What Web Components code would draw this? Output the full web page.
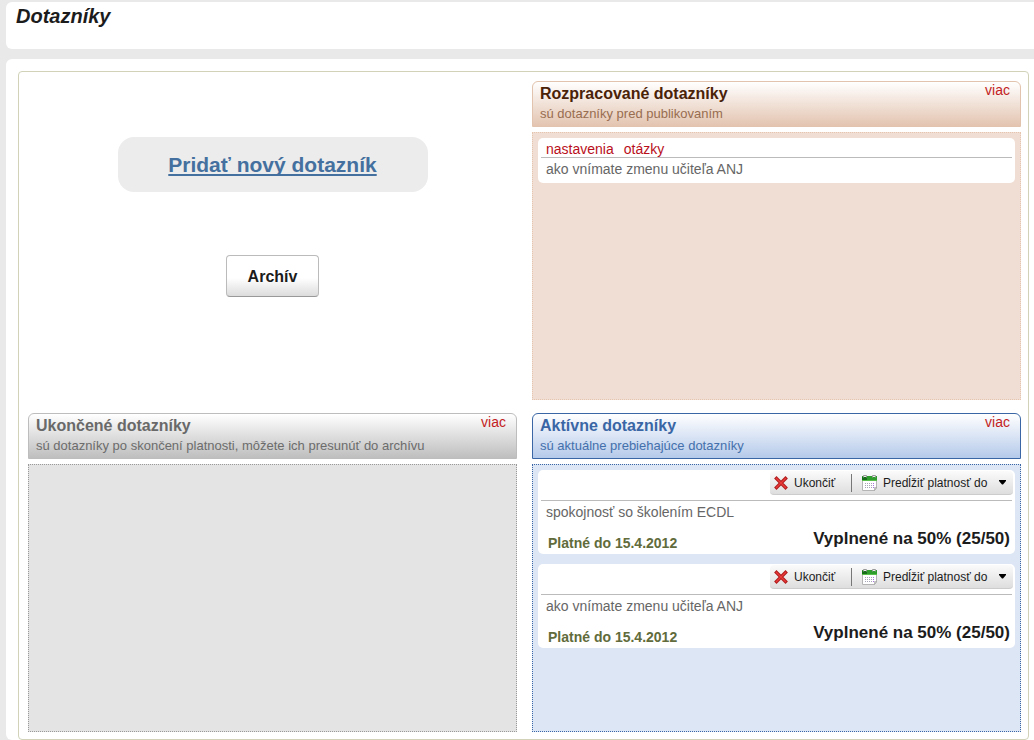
<!DOCTYPE html>
<html lang="sk">
<head>
<meta charset="utf-8">
<title>Dotazníky</title>
<style>
  html { background: #e9e9e9; }
  body { margin: 0; font-family: "Liberation Sans", Arial, sans-serif; color: #1c1c1c; }
</style>
</head>
<body>
<survey-page>
  <span slot="title">Dotazníky</span>
  <survey-board>
    <survey-actions></survey-actions>
    <survey-panel tone="draft">
      <span slot="title">Rozpracované dotazníky</span>
      <span slot="note">sú dotazníky pred publikovaním</span>
      <draft-card>ako vnímate zmenu učiteľa ANJ</draft-card>
    </survey-panel>
    <survey-panel tone="closed">
      <span slot="title">Ukončené dotazníky</span>
      <span slot="note">sú dotazníky po skončení platnosti, môžete ich presunúť do archívu</span>
    </survey-panel>
    <survey-panel tone="active">
      <span slot="title">Aktívne dotazníky</span>
      <span slot="note">sú aktuálne prebiehajúce dotazníky</span>
      <active-card>
        spokojnosť so školením ECDL
        <span slot="valid">Platné do 15.4.2012</span>
        <span slot="filled">Vyplnené na 50% (25/50)</span>
      </active-card>
      <active-card>
        ako vnímate zmenu učiteľa ANJ
        <span slot="valid">Platné do 15.4.2012</span>
        <span slot="filled">Vyplnené na 50% (25/50)</span>
      </active-card>
    </survey-panel>
  </survey-board>
</survey-page>
<script>
  const define = (name, html) => customElements.define(name, class extends HTMLElement {
    constructor() {
      super();
      this.attachShadow({ mode: "open" }).innerHTML = html;
    }
  });

  define("survey-page", `
    <style>
      :host { display: block; padding: 2px 0 0 6px; }
      header, main { background: #fff; border-radius: 6px 0 0 6px; }
      header { box-sizing: border-box; min-height: 47px; padding: 2px 10px; margin-bottom: 10px; }
      h1 { margin: 0; font-size: 20px; line-height: 24px; font-style: italic; }
      main { padding: 12px 5px 0 12px; }
    </style>
    <header><h1><slot name="title"></slot></h1></header>
    <main><slot></slot></main>`);

  define("survey-board", `
    <style>
      :host { display: grid; grid-template-columns: 1fr 1fr; gap: 13px 15px;
        border: 1px solid #d1d2b8; border-radius: 4px; padding: 9px 7px 7px 9px; }
    </style>
    <slot></slot>`);

  define("survey-actions", `
    <style>
      :host { display: flex; flex-direction: column; align-items: center; gap: 63px; padding-top: 56px; }
      .add { box-sizing: border-box; width: 310px; max-width: 100%; padding: 15px 10px 14px; border-radius: 16px;
        background: #ececec; text-align: center; font-size: 21px; line-height: 26px; font-weight: bold; }
      a { color: #44709f; text-decoration: underline; text-decoration-thickness: 2px; text-underline-offset: 2px;
        text-decoration-skip-ink: none; }
      button { height: 42px; padding: 1px 21px 0; border: 1px solid #bbb; border-bottom-color: #999; border-radius: 4px;
        background: linear-gradient(#fff 55%, #dcdcdc); font: bold 16px "Liberation Sans", Arial, sans-serif; color: #1c1c1c; }
    </style>
    <div class="add"><a href="#novy">Pridať nový dotazník</a></div>
    <button type="button">Archív</button>`);

  define("survey-panel", `
    <style>
      :host { display: flex; flex-direction: column; gap: 5px; }
      :host([tone="draft"]) { --edge: #e2c3ad; --foot: #e2c3ad; --fade: #e3c4b0; --title: #4a2208; --note: #986d50; --fill: #f0ded4; --dots: #e6c5ae; }
      :host([tone="closed"]) { --edge: #bdbdbd; --foot: #bdbdbd; --fade: #bebebe; --title: #696969; --note: #6c6c6c; --fill: #e4e4e4; --dots: #999; }
      :host([tone="active"]) { --edge: #3a66a5; --foot: #3a66a5; --fade: #b5caea; --title: #3a66a5; --note: #4470ac; --fill: #dde6f5; --dots: #3a66a5; }
      header { display: flex; justify-content: space-between; box-sizing: border-box; height: 46px; padding: 1px 10px 0 7px;
        border: 1px solid var(--edge); border-bottom-color: var(--foot); border-radius: 6px 6px 0 0;
        background: linear-gradient(#fff, var(--fade)); }
      .heading { padding-top: 1px; }
      h2 { margin: 0; font-size: 16px; line-height: 20px; color: var(--title); }
      p { margin: 0; font-size: 13px; line-height: 20px; color: var(--note); }
      a { font-size: 14px; line-height: 15px; color: #c31c22; text-decoration: none; }
      section { flex: 1; box-sizing: border-box; min-height: 268px; padding: 5px; display: flex; flex-direction: column;
        gap: 10px; border: 1px dotted var(--dots); background: var(--fill); }
    </style>
    <header>
      <div class="heading"><h2><slot name="title"></slot></h2><p><slot name="note"></slot></p></div>
      <a href="#viac">viac</a>
    </header>
    <section><slot></slot></section>`);

  define("draft-card", `
    <style>
      :host { display: block; padding: 1px 3px 3px; border-radius: 5px; background: #fff; font-size: 14px; line-height: 22px; color: #666; }
      nav { display: flex; gap: 10px; height: 18px; line-height: 20px; padding: 0 5px; border-bottom: 1px solid #bbb; }
      a { color: #b90f1b; text-decoration: none; }
      div { padding: 0 5px; }
    </style>
    <nav><a href="#nastavenia">nastavenia</a><a href="#otazky">otázky</a></nav>
    <div><slot></slot></div>`);

  define("active-card", `
    <style>
      :host { display: block; box-sizing: border-box; padding: 1px 3px 0; min-height: 84px; border-radius: 5px; background: #fff; font-size: 14px; color: #666; }
      .bar { display: flex; justify-content: flex-end; height: 29px; border-bottom: 1px solid #bbb; }
      survey-toolbar { margin-right: -1px; }
      .name { padding: 0 5px; line-height: 22px; }
      .info { display: flex; justify-content: space-between; align-items: flex-start; padding: 5px 2px 0 7px; font-weight: bold; line-height: 22px; }
      .valid { color: #616b3b; padding-top: 4px; }
      .filled { font-size: 17px; color: #1c1c1c; }
    </style>
    <div class="bar"><survey-toolbar></survey-toolbar></div>
    <div class="name"><slot></slot></div>
    <div class="info"><span class="valid"><slot name="valid"></slot></span><span class="filled"><slot name="filled"></slot></span></div>`);

  define("survey-toolbar", `
    <style>
      :host { display: flex; align-items: center; box-sizing: border-box; height: 24px; border-radius: 4px;
        background: linear-gradient(#fbfbfb, #dedede); border-bottom: 1px solid #ccc; }
      button { display: flex; align-items: center; height: 18px; border: 0; background: none; margin: 0;
        font: 12px "Liberation Sans", Arial, sans-serif; color: #1c1c1c; white-space: nowrap; }
      .end { width: 82px; padding: 0 0 0 4px; gap: 6px; border-right: 1px solid #777; }
      .extend { width: 161px; padding: 0 6px 0 10px; gap: 6px; }
      .caret { margin-left: auto; }
    </style>
    <button type="button" class="end"><icon-cross></icon-cross>Ukončiť</button>
    <button type="button" class="extend"><icon-calendar></icon-calendar>Predĺžiť platnosť do
      <svg class="caret" width="9" height="5" viewBox="0 0 9 5" aria-hidden="true"><path d="M1 0h7v1L5 4.500H4L1 1z" fill="#000"/></svg></button>`);

  define("icon-cross", `
    <style>:host, svg { display: block; }</style>
    <svg width="14" height="14" viewBox="0 0 14 14" aria-hidden="true">
      <path d="M2.500 2.500L11.500 11.500M11.500 2.500L2.500 11.500" stroke="#b01c1c" stroke-width="3.400" stroke-linecap="square"/>
      <path d="M2.500 2.500L11.500 11.500M11.500 2.500L2.500 11.500" stroke="#ea3a3a" stroke-width="1.400" stroke-linecap="square"/>
    </svg>`);

  define("icon-calendar", `
    <style>:host, svg { display: block; }</style>
    <svg width="15" height="16" viewBox="0 0 15 16" aria-hidden="true">
      <path d="M.5 3.500h14V13l-2 2.500H.5z" fill="#fff" stroke="#b4b4b4"/>
      <path d="M14.500 12.500h-2v3z" fill="#ccc" stroke="#999" stroke-width=".5"/>
      <path d="M0 1h15v5H0z" fill="#2f9d2c"/>
      <path d="M0 5h15v1H0z" fill="#58bd4b"/>
      <path d="M0 2h5v3H0z" fill="#176e18"/>
      <path d="M1.500 2.500V.5h3v2M10.500 2.500V.5h3v2" fill="none" stroke="#999"/>
      <path d="M2 1.500h2M11 1.500h2" stroke="#eee"/>
      <path d="M3 8.500h9M3 10.500h9M3 12.500h9" stroke="#a5a5b5" stroke-dasharray="1 1"/>
      <path d="M11.500 8v6" stroke="#ab70df" stroke-dasharray="1 1"/>
    </svg>`);
</script>
</body>
</html>
